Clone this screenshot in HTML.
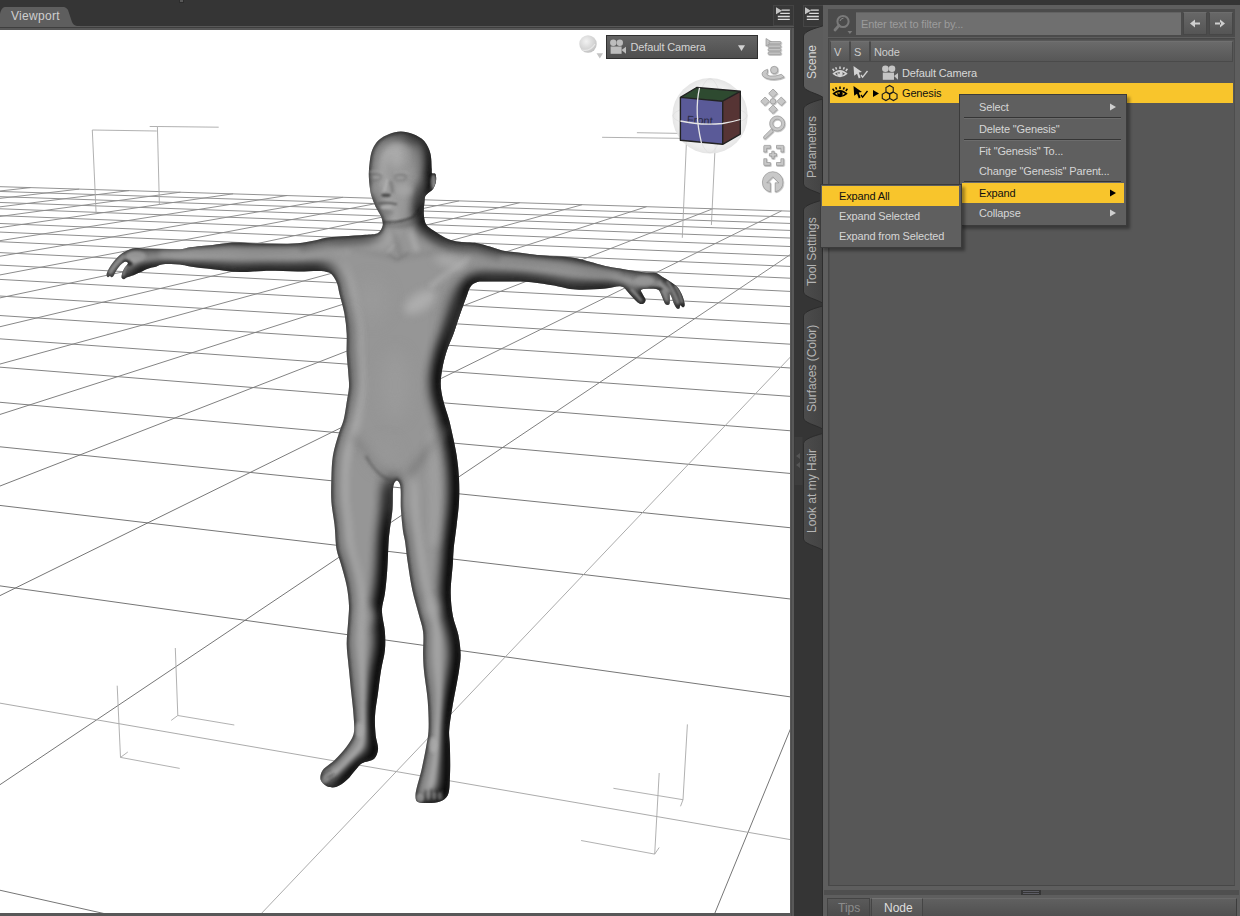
<!DOCTYPE html>
<html><head><meta charset="utf-8">
<style>
*{margin:0;padding:0;box-sizing:border-box}
html,body{width:1240px;height:916px;overflow:hidden;background:#353535;font-family:"Liberation Sans",sans-serif;font-size:11px}
.a{position:absolute}
.t11{font-size:11px;letter-spacing:-0.15px;white-space:nowrap;line-height:12px}
#vp{left:0;top:30px;width:790px;height:883px;background:#fff;overflow:hidden}
.vtab{position:absolute;left:0;top:0}
.vt{position:absolute;color:#b4b4b4;font-size:12px;white-space:nowrap;transform-origin:0 0;transform:rotate(-90deg);line-height:12px}
.hdr{position:absolute;top:41px;height:21px;background:linear-gradient(#6a6a6a,#575757);border:1px solid #4a4a4a;border-top-color:#707070;color:#cdcdcd}
.mi{position:absolute;color:#d6d6d6}
</style></head><body>
<!-- viewport frame -->
<div class="a" style="left:0;top:26px;width:794px;height:890px;background:#585858"></div>
<div class="a" style="left:0;top:27px;width:794px;height:1px;background:#3e3e3e"></div>
<div class="a" style="left:179px;top:0;width:5px;height:3px;background:#585858;border:1px solid #2c2c2c;border-top:none"></div>
<div class="a" style="left:791px;top:28px;width:1px;height:888px;background:#4c4c4c"></div>
<svg class="a" width="80" height="22" style="left:0;top:6px"><path d="M0 21 L0 8 C1 4 2 1.5 5 1 L64 1 C66 1.5 67 2.5 68 4 L72 16 C73 18.5 74.5 19.5 77 20 L80 20 L80 21 Z" fill="#5e5e5e"/></svg>
<div class="a" style="left:11px;top:9px;color:#cfcfcf;font-size:12px;line-height:14px;letter-spacing:0.3px">Viewport</div>
<!-- viewport menu icon -->
<div class="a" style="left:773px;top:5px;width:21px;height:21px;background:#383838;border:1px solid #444"></div>
<svg class="a" width="20" height="20" style="left:773px;top:5px"><path d="M3 2.3 L9 5.8 L3 9.3 Z" fill="#c4c4c4"/><path d="M8.6 5.2H16.8M7.2 8.3H16.8M4.8 11.5H16.8M4.8 14.4H16.8" stroke="#dcdcdc" stroke-width="1.3"/></svg>
<div class="a" id="vp">
<svg width="790" height="883" viewBox="0 30 790 883" style="position:absolute;left:0;top:0">
<defs><linearGradient id="gridg" gradientUnits="userSpaceOnUse" x1="0" y1="180" x2="0" y2="520"><stop offset="0" stop-color="#8e8e8e"/><stop offset="1" stop-color="#6e6e6e"/></linearGradient></defs><path d="M30.6 187.6L-2.0 191.2M79.2 189.1L-2.0 198.6M129.1 190.6L-2.0 207.1M180.4 192.2L-2.0 216.7M233.1 193.8L-2.0 227.9M287.2 195.5L-2.0 241.0M342.9 197.3L-2.0 256.6M400.1 199.0L-2.0 275.3M459.1 200.9L-2.0 298.3M519.7 202.7L-2.0 327.2M582.2 204.7L-2.0 364.6M646.6 206.7L-2.0 415.1M713.0 208.7L-2.0 486.8M781.5 210.9L-2.0 596.6M792.0 253.4L-2.0 786.0M792.0 725.2L714.5 914.0M-2.0 186.6L792.0 211.2M-2.0 191.4L792.0 217.1M-2.0 196.6L792.0 223.5M-2.0 202.4L792.0 230.5M-2.0 208.7L792.0 238.1M-2.0 215.6L792.0 246.6M-2.0 223.4L792.0 256.0M-2.0 232.0L792.0 266.5M-2.0 241.6L792.0 278.3M-2.0 252.5L792.0 291.5M-2.0 265.0L792.0 306.7M-2.0 279.3L792.0 324.1M-2.0 295.9L792.0 344.3M-2.0 315.4L792.0 368.1M-2.0 338.7L792.0 396.5M-2.0 367.0L792.0 430.9M-2.0 402.1L792.0 473.6M-2.0 446.6L792.0 527.9M-2.0 505.2L792.0 599.2M-2.0 585.6L792.0 697.1M-2.0 889.8L106.1 914.0" stroke="url(#gridg)" stroke-width="0.95" fill="none"/>
<path d="M792.0 355.3L260.9 914.0M-2.0 702.8L792.0 839.9" stroke="#a6a6a6" stroke-width="0.95" fill="none"/>
<path d="M177.8 715.5L175.3 648M177.8 715.5L234.3 725M177.8 715.5L171.2 720.4M120.5 757.4L117.2 685.7M120.5 757.4L179.7 768.4M120.5 757.4L127.8 752M683 799.7L687.4 724.4M683 799.7L613.4 788.3M683 799.7L680.5 806.3M654.7 854.1L659.2 773M654.7 854.1L581.1 840.5M654.7 854.1L659.2 847.5M92.3 130L156.8 131M92.3 130L96.1 213.2M157.4 126.5L218.7 127.2M157.4 126.5L149.7 126.5M157.4 126.5L159.4 204.8M687 133.5L636.9 132.7M686.8 133.5L682.3 237.8M715.5 138.8L602.1 137.3M715.5 138.8L711.4 225" stroke="#a8a8a8" stroke-width="0.9" fill="none"/>
<defs>
<clipPath id="figclip"><path d="M400.70 131.40C404.69 131.37 409.04 132.45 412.90 134.00C416.89 135.60 421.31 137.83 424.20 141.00C427.13 144.21 429.04 148.75 430.30 153.20C431.66 157.99 431.37 165.28 431.70 168.90C431.87 170.82 431.37 172.54 432.10 173.30C432.71 173.94 434.51 172.99 435.20 173.70C436.27 174.79 436.32 178.63 436.00 181.10C435.66 183.73 434.55 186.80 433.00 189.00C431.49 191.14 428.29 192.76 426.90 194.20C426.06 195.07 425.52 195.48 425.10 196.50C424.51 197.94 424.59 200.01 424.40 202.30C424.12 205.62 423.43 210.64 423.80 214.50C424.14 218.08 424.58 221.99 426.30 224.70C427.92 227.24 430.74 228.55 433.50 230.50C436.86 232.88 441.20 235.84 445.20 237.70C448.97 239.45 452.32 240.59 456.80 241.50C462.63 242.68 471.44 242.15 477.40 243.20C482.10 244.03 485.67 245.37 489.80 246.60C493.97 247.84 497.70 249.59 502.30 250.60C507.70 251.78 513.96 252.02 520.30 252.80C527.41 253.67 535.01 254.86 542.90 255.60C551.51 256.40 562.70 256.35 570.00 257.30C575.02 257.95 577.81 258.67 582.60 259.80C589.06 261.33 598.43 264.50 605.20 266.00C610.62 267.20 615.22 267.68 620.00 268.50C624.50 269.28 628.73 270.13 633.10 270.80C637.46 271.47 642.21 272.18 646.20 272.50C649.53 272.77 652.61 272.00 655.40 272.80C658.05 273.56 660.11 275.50 662.60 277.00C665.33 278.65 668.49 280.47 671.10 282.30C673.49 283.98 675.93 285.48 677.70 287.50C679.39 289.43 680.55 291.86 681.60 294.10C682.59 296.23 683.42 298.52 683.90 300.60C684.32 302.43 684.95 304.79 684.50 305.90C684.22 306.59 683.50 307.19 682.90 307.20C682.14 307.21 680.90 305.01 680.30 305.20C679.69 305.40 679.97 308.01 679.30 308.50C678.76 308.90 677.70 308.88 677.00 308.50C676.00 307.96 675.18 306.15 674.40 304.60C673.40 302.61 672.71 299.30 671.80 297.40C671.15 296.05 670.18 293.99 669.80 294.10C669.31 294.24 669.96 298.70 669.80 300.60C669.67 302.10 669.85 303.97 669.10 304.60C668.44 305.16 666.83 305.18 665.90 304.60C664.49 303.73 663.74 300.30 662.60 298.00C661.35 295.49 660.27 291.54 658.70 290.10C657.71 289.19 656.81 289.07 655.40 288.80C653.13 288.37 648.82 288.48 646.20 288.80C644.20 289.05 641.52 289.08 641.00 290.10C640.50 291.09 642.18 293.13 642.90 294.70C643.69 296.42 645.63 298.41 645.60 300.00C645.58 301.32 644.56 302.97 643.60 303.60C642.74 304.16 641.46 304.23 640.30 303.90C638.68 303.44 636.89 301.63 635.10 300.00C632.80 297.91 629.94 294.39 627.90 292.10C626.36 290.37 625.37 288.48 623.90 287.50C622.69 286.69 621.74 286.35 620.00 286.20C616.68 285.92 610.67 287.93 605.20 288.50C598.48 289.20 589.04 289.71 582.60 289.70C577.79 289.69 574.41 289.59 570.00 289.00C565.01 288.33 559.95 286.65 554.20 285.60C547.36 284.35 539.15 282.87 531.60 282.20C524.09 281.54 516.33 281.70 509.00 281.60C502.05 281.51 494.48 281.50 488.70 281.60C484.38 281.68 480.53 281.04 477.40 282.00C474.84 282.78 472.77 283.91 471.00 286.00C468.65 288.77 467.63 293.86 465.90 298.30C463.90 303.44 461.81 309.36 459.80 315.10C457.71 321.08 455.74 327.68 453.60 333.50C451.63 338.86 449.27 343.53 447.50 348.80C445.68 354.22 444.03 359.84 442.90 365.60C441.74 371.53 440.63 378.08 440.70 383.90C440.76 389.23 441.70 393.76 442.90 399.20C444.32 405.65 447.47 413.87 449.10 420.00C450.37 424.79 451.03 427.98 452.10 432.90C453.52 439.44 455.55 448.13 456.70 455.80C457.85 463.43 458.62 471.13 459.00 478.80C459.38 486.43 459.38 494.08 459.00 501.70C458.62 509.34 457.57 516.77 456.70 524.60C455.78 532.85 454.22 542.95 453.60 550.00C453.16 555.01 453.23 557.69 452.90 562.90C452.39 570.93 450.57 584.04 450.70 593.50C450.82 601.69 451.62 609.24 453.00 616.40C454.26 622.93 457.04 628.49 458.30 634.80C459.59 641.25 460.55 648.50 460.60 654.70C460.65 660.13 459.97 663.77 459.10 670.00C457.72 679.89 453.96 697.06 452.20 708.20C450.84 716.82 449.38 724.31 449.10 731.20C448.87 736.78 449.74 740.45 449.90 746.40C450.12 754.83 450.45 768.11 449.90 777.00C449.47 783.92 449.95 791.20 447.60 795.40C445.90 798.45 443.21 800.19 440.00 801.50C435.97 803.14 428.92 803.20 424.70 803.00C421.68 802.86 418.51 802.94 417.00 801.50C415.65 800.22 415.51 798.14 415.50 795.40C415.47 789.75 419.77 777.82 421.60 769.40C423.31 761.51 424.99 753.29 426.20 746.40C427.18 740.82 428.13 737.16 428.50 731.20C429.02 722.79 428.46 710.78 427.70 700.60C426.93 690.38 424.65 678.46 423.90 670.00C423.37 664.04 423.25 660.32 423.10 654.70C422.92 647.81 423.99 638.88 423.10 631.70C422.30 625.20 420.17 619.84 418.50 613.40C416.63 606.19 414.14 598.53 412.40 590.50C410.51 581.77 409.11 571.68 407.80 562.90C406.61 554.92 405.74 545.61 404.80 540.00C404.25 536.70 403.70 535.50 403.20 532.20C402.35 526.59 401.46 517.13 400.90 509.30C400.31 501.08 401.57 488.39 399.80 484.00C399.05 482.14 397.79 480.59 396.80 480.60C395.82 480.61 394.64 482.15 393.90 484.00C392.14 488.39 393.26 501.09 392.50 509.30C391.77 517.14 390.16 526.57 389.50 532.20C389.12 535.48 388.96 536.54 388.70 540.00C388.18 546.84 387.91 561.15 387.20 570.60C386.59 578.79 385.88 586.47 384.90 593.50C384.06 599.55 382.01 604.35 381.90 610.30C381.77 616.99 384.42 624.82 384.90 631.70C385.34 638.05 385.49 643.87 384.90 650.10C384.28 656.63 382.22 663.12 381.10 670.00C379.90 677.35 379.02 685.26 378.00 692.90C376.98 700.56 375.35 708.51 375.00 715.90C374.68 722.73 375.10 729.71 375.70 735.70C376.21 740.73 378.46 745.42 378.00 749.50C377.61 752.94 376.53 756.44 374.20 758.70C371.53 761.29 365.20 761.23 362.00 763.30C359.39 764.98 358.09 767.04 355.90 769.40C353.09 772.42 350.12 777.12 346.70 780.10C343.45 782.93 339.59 786.11 336.00 787.00C332.95 787.76 329.38 787.40 326.80 786.20C324.31 785.04 321.50 782.58 320.70 780.10C319.87 777.52 320.58 773.81 322.20 770.90C324.34 767.05 330.53 764.14 334.50 760.20C338.72 756.02 343.40 751.03 346.70 746.40C349.58 742.36 352.37 738.86 353.60 734.20C355.00 728.87 353.92 722.34 353.60 715.90C353.24 708.66 352.07 700.56 351.30 692.90C350.53 685.26 349.57 675.60 349.00 670.00C348.67 666.75 348.49 665.42 348.20 662.30C347.75 657.50 346.75 650.45 346.70 644.00C346.64 636.77 347.80 627.89 348.20 621.00C348.53 615.38 349.17 611.12 349.00 605.70C348.80 599.52 347.99 592.70 346.70 585.90C345.29 578.47 342.46 569.45 340.60 562.90C339.20 557.97 337.68 555.08 336.70 550.00C335.36 543.01 335.41 532.84 334.50 524.60C333.63 516.76 331.92 509.35 331.40 501.70C330.89 494.08 331.15 486.44 331.40 478.80C331.65 471.14 331.65 463.40 332.90 455.80C334.16 448.10 336.98 439.41 339.00 432.90C340.54 427.95 342.36 424.70 343.60 420.00C345.02 414.60 345.77 407.90 346.70 402.20C347.56 396.94 348.75 392.09 349.00 387.00C349.25 381.92 348.56 377.03 348.20 371.70C347.81 365.85 346.95 359.55 346.70 353.30C346.44 346.83 347.08 340.10 346.70 333.50C346.32 326.86 345.60 320.17 344.40 313.60C343.20 307.00 340.93 299.74 339.50 294.00C338.38 289.51 338.27 285.59 336.50 282.00C334.75 278.46 333.02 274.62 329.00 272.60C322.52 269.34 308.33 271.78 297.70 271.50C286.65 271.21 274.19 270.75 263.90 270.90C255.24 271.02 248.21 272.23 240.00 272.00C231.24 271.75 221.52 270.18 212.90 269.20C205.02 268.30 196.36 267.33 190.30 266.40C186.19 265.77 183.33 264.92 180.00 264.50C176.91 264.11 174.06 263.91 171.00 263.90C167.83 263.89 164.17 263.86 161.30 264.50C158.87 265.05 156.99 266.45 154.80 267.10C152.69 267.73 150.63 267.67 148.40 268.40C145.74 269.27 142.62 271.11 140.00 272.30C137.70 273.35 135.73 274.34 133.50 275.20C131.23 276.08 128.23 276.67 126.50 277.50C125.38 278.04 124.73 279.18 123.90 279.20C123.17 279.22 122.17 278.68 121.80 278.00C121.32 277.13 121.67 275.44 122.00 274.00C122.41 272.17 123.48 269.86 124.50 268.00C125.49 266.20 128.24 264.11 128.00 263.00C127.84 262.23 126.48 261.46 125.50 261.50C124.01 261.57 121.58 263.92 120.00 265.50C118.42 267.08 117.16 269.15 116.00 271.00C114.92 272.72 114.14 275.20 113.20 276.20C112.67 276.77 112.15 277.21 111.60 277.20C111.01 277.19 110.40 275.99 109.80 276.00C109.20 276.01 108.53 277.38 108.00 277.30C107.46 277.22 106.77 276.29 106.60 275.50C106.36 274.38 107.08 272.55 107.70 271.00C108.44 269.14 109.70 267.14 111.00 265.20C112.45 263.04 114.20 260.73 116.10 258.70C118.05 256.62 120.34 254.44 122.60 252.90C124.65 251.51 126.76 250.50 129.00 249.70C131.26 248.89 133.57 248.26 136.10 248.10C138.93 247.93 141.90 248.84 145.20 249.00C149.12 249.19 153.23 248.96 158.10 249.00C164.44 249.06 174.09 249.97 180.00 249.40C184.10 249.00 186.18 247.85 190.30 247.20C196.35 246.25 205.90 245.71 212.90 244.90C219.00 244.20 223.32 243.02 230.00 242.70C239.37 242.25 252.61 243.72 263.90 243.80C275.17 243.88 288.38 244.05 297.70 243.20C304.36 242.60 309.37 241.41 314.70 240.40C319.47 239.50 323.57 238.18 328.20 237.50C333.00 236.79 337.56 236.70 343.00 236.30C349.67 235.81 358.86 235.53 365.30 234.80C370.26 234.24 375.46 234.70 378.40 232.70C380.75 231.10 382.18 227.42 382.70 225.40C383.02 224.14 382.78 223.33 382.60 222.10C382.36 220.47 381.94 218.58 381.10 216.50C379.91 213.58 377.11 209.93 375.50 206.50C373.91 203.10 372.48 199.46 371.50 196.00C370.59 192.77 370.14 189.81 369.70 186.40C369.20 182.57 368.80 178.19 368.80 174.10C368.80 170.02 369.12 165.95 369.70 161.90C370.28 157.81 370.73 153.39 372.30 149.70C373.81 146.15 376.01 142.70 378.80 140.10C381.65 137.44 385.61 135.45 389.30 134.00C392.92 132.57 396.83 131.43 400.70 131.40Z"/></clipPath>
<filter id="shade" x="0" y="0" width="790" height="913" filterUnits="userSpaceOnUse" color-interpolation-filters="sRGB">
<feGaussianBlur in="SourceAlpha" stdDeviation="8.0" result="h"/>
<feDiffuseLighting in="h" surfaceScale="20.0" diffuseConstant="1" lighting-color="#a4a4a4" result="d"><feDistantLight azimuth="200.0" elevation="66.0"/></feDiffuseLighting>
<feGaussianBlur in="d" stdDeviation="1.5" result="d2"/>
<feComposite in="d2" in2="SourceAlpha" operator="in"/>
</filter>
<filter id="rimb" x="0" y="0" width="790" height="913" filterUnits="userSpaceOnUse"><feGaussianBlur stdDeviation="1.5"/></filter>
</defs>
<path d="M400.70 131.40C404.69 131.37 409.04 132.45 412.90 134.00C416.89 135.60 421.31 137.83 424.20 141.00C427.13 144.21 429.04 148.75 430.30 153.20C431.66 157.99 431.37 165.28 431.70 168.90C431.87 170.82 431.37 172.54 432.10 173.30C432.71 173.94 434.51 172.99 435.20 173.70C436.27 174.79 436.32 178.63 436.00 181.10C435.66 183.73 434.55 186.80 433.00 189.00C431.49 191.14 428.29 192.76 426.90 194.20C426.06 195.07 425.52 195.48 425.10 196.50C424.51 197.94 424.59 200.01 424.40 202.30C424.12 205.62 423.43 210.64 423.80 214.50C424.14 218.08 424.58 221.99 426.30 224.70C427.92 227.24 430.74 228.55 433.50 230.50C436.86 232.88 441.20 235.84 445.20 237.70C448.97 239.45 452.32 240.59 456.80 241.50C462.63 242.68 471.44 242.15 477.40 243.20C482.10 244.03 485.67 245.37 489.80 246.60C493.97 247.84 497.70 249.59 502.30 250.60C507.70 251.78 513.96 252.02 520.30 252.80C527.41 253.67 535.01 254.86 542.90 255.60C551.51 256.40 562.70 256.35 570.00 257.30C575.02 257.95 577.81 258.67 582.60 259.80C589.06 261.33 598.43 264.50 605.20 266.00C610.62 267.20 615.22 267.68 620.00 268.50C624.50 269.28 628.73 270.13 633.10 270.80C637.46 271.47 642.21 272.18 646.20 272.50C649.53 272.77 652.61 272.00 655.40 272.80C658.05 273.56 660.11 275.50 662.60 277.00C665.33 278.65 668.49 280.47 671.10 282.30C673.49 283.98 675.93 285.48 677.70 287.50C679.39 289.43 680.55 291.86 681.60 294.10C682.59 296.23 683.42 298.52 683.90 300.60C684.32 302.43 684.95 304.79 684.50 305.90C684.22 306.59 683.50 307.19 682.90 307.20C682.14 307.21 680.90 305.01 680.30 305.20C679.69 305.40 679.97 308.01 679.30 308.50C678.76 308.90 677.70 308.88 677.00 308.50C676.00 307.96 675.18 306.15 674.40 304.60C673.40 302.61 672.71 299.30 671.80 297.40C671.15 296.05 670.18 293.99 669.80 294.10C669.31 294.24 669.96 298.70 669.80 300.60C669.67 302.10 669.85 303.97 669.10 304.60C668.44 305.16 666.83 305.18 665.90 304.60C664.49 303.73 663.74 300.30 662.60 298.00C661.35 295.49 660.27 291.54 658.70 290.10C657.71 289.19 656.81 289.07 655.40 288.80C653.13 288.37 648.82 288.48 646.20 288.80C644.20 289.05 641.52 289.08 641.00 290.10C640.50 291.09 642.18 293.13 642.90 294.70C643.69 296.42 645.63 298.41 645.60 300.00C645.58 301.32 644.56 302.97 643.60 303.60C642.74 304.16 641.46 304.23 640.30 303.90C638.68 303.44 636.89 301.63 635.10 300.00C632.80 297.91 629.94 294.39 627.90 292.10C626.36 290.37 625.37 288.48 623.90 287.50C622.69 286.69 621.74 286.35 620.00 286.20C616.68 285.92 610.67 287.93 605.20 288.50C598.48 289.20 589.04 289.71 582.60 289.70C577.79 289.69 574.41 289.59 570.00 289.00C565.01 288.33 559.95 286.65 554.20 285.60C547.36 284.35 539.15 282.87 531.60 282.20C524.09 281.54 516.33 281.70 509.00 281.60C502.05 281.51 494.48 281.50 488.70 281.60C484.38 281.68 480.53 281.04 477.40 282.00C474.84 282.78 472.77 283.91 471.00 286.00C468.65 288.77 467.63 293.86 465.90 298.30C463.90 303.44 461.81 309.36 459.80 315.10C457.71 321.08 455.74 327.68 453.60 333.50C451.63 338.86 449.27 343.53 447.50 348.80C445.68 354.22 444.03 359.84 442.90 365.60C441.74 371.53 440.63 378.08 440.70 383.90C440.76 389.23 441.70 393.76 442.90 399.20C444.32 405.65 447.47 413.87 449.10 420.00C450.37 424.79 451.03 427.98 452.10 432.90C453.52 439.44 455.55 448.13 456.70 455.80C457.85 463.43 458.62 471.13 459.00 478.80C459.38 486.43 459.38 494.08 459.00 501.70C458.62 509.34 457.57 516.77 456.70 524.60C455.78 532.85 454.22 542.95 453.60 550.00C453.16 555.01 453.23 557.69 452.90 562.90C452.39 570.93 450.57 584.04 450.70 593.50C450.82 601.69 451.62 609.24 453.00 616.40C454.26 622.93 457.04 628.49 458.30 634.80C459.59 641.25 460.55 648.50 460.60 654.70C460.65 660.13 459.97 663.77 459.10 670.00C457.72 679.89 453.96 697.06 452.20 708.20C450.84 716.82 449.38 724.31 449.10 731.20C448.87 736.78 449.74 740.45 449.90 746.40C450.12 754.83 450.45 768.11 449.90 777.00C449.47 783.92 449.95 791.20 447.60 795.40C445.90 798.45 443.21 800.19 440.00 801.50C435.97 803.14 428.92 803.20 424.70 803.00C421.68 802.86 418.51 802.94 417.00 801.50C415.65 800.22 415.51 798.14 415.50 795.40C415.47 789.75 419.77 777.82 421.60 769.40C423.31 761.51 424.99 753.29 426.20 746.40C427.18 740.82 428.13 737.16 428.50 731.20C429.02 722.79 428.46 710.78 427.70 700.60C426.93 690.38 424.65 678.46 423.90 670.00C423.37 664.04 423.25 660.32 423.10 654.70C422.92 647.81 423.99 638.88 423.10 631.70C422.30 625.20 420.17 619.84 418.50 613.40C416.63 606.19 414.14 598.53 412.40 590.50C410.51 581.77 409.11 571.68 407.80 562.90C406.61 554.92 405.74 545.61 404.80 540.00C404.25 536.70 403.70 535.50 403.20 532.20C402.35 526.59 401.46 517.13 400.90 509.30C400.31 501.08 401.57 488.39 399.80 484.00C399.05 482.14 397.79 480.59 396.80 480.60C395.82 480.61 394.64 482.15 393.90 484.00C392.14 488.39 393.26 501.09 392.50 509.30C391.77 517.14 390.16 526.57 389.50 532.20C389.12 535.48 388.96 536.54 388.70 540.00C388.18 546.84 387.91 561.15 387.20 570.60C386.59 578.79 385.88 586.47 384.90 593.50C384.06 599.55 382.01 604.35 381.90 610.30C381.77 616.99 384.42 624.82 384.90 631.70C385.34 638.05 385.49 643.87 384.90 650.10C384.28 656.63 382.22 663.12 381.10 670.00C379.90 677.35 379.02 685.26 378.00 692.90C376.98 700.56 375.35 708.51 375.00 715.90C374.68 722.73 375.10 729.71 375.70 735.70C376.21 740.73 378.46 745.42 378.00 749.50C377.61 752.94 376.53 756.44 374.20 758.70C371.53 761.29 365.20 761.23 362.00 763.30C359.39 764.98 358.09 767.04 355.90 769.40C353.09 772.42 350.12 777.12 346.70 780.10C343.45 782.93 339.59 786.11 336.00 787.00C332.95 787.76 329.38 787.40 326.80 786.20C324.31 785.04 321.50 782.58 320.70 780.10C319.87 777.52 320.58 773.81 322.20 770.90C324.34 767.05 330.53 764.14 334.50 760.20C338.72 756.02 343.40 751.03 346.70 746.40C349.58 742.36 352.37 738.86 353.60 734.20C355.00 728.87 353.92 722.34 353.60 715.90C353.24 708.66 352.07 700.56 351.30 692.90C350.53 685.26 349.57 675.60 349.00 670.00C348.67 666.75 348.49 665.42 348.20 662.30C347.75 657.50 346.75 650.45 346.70 644.00C346.64 636.77 347.80 627.89 348.20 621.00C348.53 615.38 349.17 611.12 349.00 605.70C348.80 599.52 347.99 592.70 346.70 585.90C345.29 578.47 342.46 569.45 340.60 562.90C339.20 557.97 337.68 555.08 336.70 550.00C335.36 543.01 335.41 532.84 334.50 524.60C333.63 516.76 331.92 509.35 331.40 501.70C330.89 494.08 331.15 486.44 331.40 478.80C331.65 471.14 331.65 463.40 332.90 455.80C334.16 448.10 336.98 439.41 339.00 432.90C340.54 427.95 342.36 424.70 343.60 420.00C345.02 414.60 345.77 407.90 346.70 402.20C347.56 396.94 348.75 392.09 349.00 387.00C349.25 381.92 348.56 377.03 348.20 371.70C347.81 365.85 346.95 359.55 346.70 353.30C346.44 346.83 347.08 340.10 346.70 333.50C346.32 326.86 345.60 320.17 344.40 313.60C343.20 307.00 340.93 299.74 339.50 294.00C338.38 289.51 338.27 285.59 336.50 282.00C334.75 278.46 333.02 274.62 329.00 272.60C322.52 269.34 308.33 271.78 297.70 271.50C286.65 271.21 274.19 270.75 263.90 270.90C255.24 271.02 248.21 272.23 240.00 272.00C231.24 271.75 221.52 270.18 212.90 269.20C205.02 268.30 196.36 267.33 190.30 266.40C186.19 265.77 183.33 264.92 180.00 264.50C176.91 264.11 174.06 263.91 171.00 263.90C167.83 263.89 164.17 263.86 161.30 264.50C158.87 265.05 156.99 266.45 154.80 267.10C152.69 267.73 150.63 267.67 148.40 268.40C145.74 269.27 142.62 271.11 140.00 272.30C137.70 273.35 135.73 274.34 133.50 275.20C131.23 276.08 128.23 276.67 126.50 277.50C125.38 278.04 124.73 279.18 123.90 279.20C123.17 279.22 122.17 278.68 121.80 278.00C121.32 277.13 121.67 275.44 122.00 274.00C122.41 272.17 123.48 269.86 124.50 268.00C125.49 266.20 128.24 264.11 128.00 263.00C127.84 262.23 126.48 261.46 125.50 261.50C124.01 261.57 121.58 263.92 120.00 265.50C118.42 267.08 117.16 269.15 116.00 271.00C114.92 272.72 114.14 275.20 113.20 276.20C112.67 276.77 112.15 277.21 111.60 277.20C111.01 277.19 110.40 275.99 109.80 276.00C109.20 276.01 108.53 277.38 108.00 277.30C107.46 277.22 106.77 276.29 106.60 275.50C106.36 274.38 107.08 272.55 107.70 271.00C108.44 269.14 109.70 267.14 111.00 265.20C112.45 263.04 114.20 260.73 116.10 258.70C118.05 256.62 120.34 254.44 122.60 252.90C124.65 251.51 126.76 250.50 129.00 249.70C131.26 248.89 133.57 248.26 136.10 248.10C138.93 247.93 141.90 248.84 145.20 249.00C149.12 249.19 153.23 248.96 158.10 249.00C164.44 249.06 174.09 249.97 180.00 249.40C184.10 249.00 186.18 247.85 190.30 247.20C196.35 246.25 205.90 245.71 212.90 244.90C219.00 244.20 223.32 243.02 230.00 242.70C239.37 242.25 252.61 243.72 263.90 243.80C275.17 243.88 288.38 244.05 297.70 243.20C304.36 242.60 309.37 241.41 314.70 240.40C319.47 239.50 323.57 238.18 328.20 237.50C333.00 236.79 337.56 236.70 343.00 236.30C349.67 235.81 358.86 235.53 365.30 234.80C370.26 234.24 375.46 234.70 378.40 232.70C380.75 231.10 382.18 227.42 382.70 225.40C383.02 224.14 382.78 223.33 382.60 222.10C382.36 220.47 381.94 218.58 381.10 216.50C379.91 213.58 377.11 209.93 375.50 206.50C373.91 203.10 372.48 199.46 371.50 196.00C370.59 192.77 370.14 189.81 369.70 186.40C369.20 182.57 368.80 178.19 368.80 174.10C368.80 170.02 369.12 165.95 369.70 161.90C370.28 157.81 370.73 153.39 372.30 149.70C373.81 146.15 376.01 142.70 378.80 140.10C381.65 137.44 385.61 135.45 389.30 134.00C392.92 132.57 396.83 131.43 400.70 131.40Z" fill="#000" filter="url(#shade)"/>
<g clip-path="url(#figclip)"><path d="M400.70 131.40C404.69 131.37 409.04 132.45 412.90 134.00C416.89 135.60 421.31 137.83 424.20 141.00C427.13 144.21 429.04 148.75 430.30 153.20C431.66 157.99 431.37 165.28 431.70 168.90C431.87 170.82 431.37 172.54 432.10 173.30C432.71 173.94 434.51 172.99 435.20 173.70C436.27 174.79 436.32 178.63 436.00 181.10C435.66 183.73 434.55 186.80 433.00 189.00C431.49 191.14 428.29 192.76 426.90 194.20C426.06 195.07 425.52 195.48 425.10 196.50C424.51 197.94 424.59 200.01 424.40 202.30C424.12 205.62 423.43 210.64 423.80 214.50C424.14 218.08 424.58 221.99 426.30 224.70C427.92 227.24 430.74 228.55 433.50 230.50C436.86 232.88 441.20 235.84 445.20 237.70C448.97 239.45 452.32 240.59 456.80 241.50C462.63 242.68 471.44 242.15 477.40 243.20C482.10 244.03 485.67 245.37 489.80 246.60C493.97 247.84 497.70 249.59 502.30 250.60C507.70 251.78 513.96 252.02 520.30 252.80C527.41 253.67 535.01 254.86 542.90 255.60C551.51 256.40 562.70 256.35 570.00 257.30C575.02 257.95 577.81 258.67 582.60 259.80C589.06 261.33 598.43 264.50 605.20 266.00C610.62 267.20 615.22 267.68 620.00 268.50C624.50 269.28 628.73 270.13 633.10 270.80C637.46 271.47 642.21 272.18 646.20 272.50C649.53 272.77 652.61 272.00 655.40 272.80C658.05 273.56 660.11 275.50 662.60 277.00C665.33 278.65 668.49 280.47 671.10 282.30C673.49 283.98 675.93 285.48 677.70 287.50C679.39 289.43 680.55 291.86 681.60 294.10C682.59 296.23 683.42 298.52 683.90 300.60C684.32 302.43 684.95 304.79 684.50 305.90C684.22 306.59 683.50 307.19 682.90 307.20C682.14 307.21 680.90 305.01 680.30 305.20C679.69 305.40 679.97 308.01 679.30 308.50C678.76 308.90 677.70 308.88 677.00 308.50C676.00 307.96 675.18 306.15 674.40 304.60C673.40 302.61 672.71 299.30 671.80 297.40C671.15 296.05 670.18 293.99 669.80 294.10C669.31 294.24 669.96 298.70 669.80 300.60C669.67 302.10 669.85 303.97 669.10 304.60C668.44 305.16 666.83 305.18 665.90 304.60C664.49 303.73 663.74 300.30 662.60 298.00C661.35 295.49 660.27 291.54 658.70 290.10C657.71 289.19 656.81 289.07 655.40 288.80C653.13 288.37 648.82 288.48 646.20 288.80C644.20 289.05 641.52 289.08 641.00 290.10C640.50 291.09 642.18 293.13 642.90 294.70C643.69 296.42 645.63 298.41 645.60 300.00C645.58 301.32 644.56 302.97 643.60 303.60C642.74 304.16 641.46 304.23 640.30 303.90C638.68 303.44 636.89 301.63 635.10 300.00C632.80 297.91 629.94 294.39 627.90 292.10C626.36 290.37 625.37 288.48 623.90 287.50C622.69 286.69 621.74 286.35 620.00 286.20C616.68 285.92 610.67 287.93 605.20 288.50C598.48 289.20 589.04 289.71 582.60 289.70C577.79 289.69 574.41 289.59 570.00 289.00C565.01 288.33 559.95 286.65 554.20 285.60C547.36 284.35 539.15 282.87 531.60 282.20C524.09 281.54 516.33 281.70 509.00 281.60C502.05 281.51 494.48 281.50 488.70 281.60C484.38 281.68 480.53 281.04 477.40 282.00C474.84 282.78 472.77 283.91 471.00 286.00C468.65 288.77 467.63 293.86 465.90 298.30C463.90 303.44 461.81 309.36 459.80 315.10C457.71 321.08 455.74 327.68 453.60 333.50C451.63 338.86 449.27 343.53 447.50 348.80C445.68 354.22 444.03 359.84 442.90 365.60C441.74 371.53 440.63 378.08 440.70 383.90C440.76 389.23 441.70 393.76 442.90 399.20C444.32 405.65 447.47 413.87 449.10 420.00C450.37 424.79 451.03 427.98 452.10 432.90C453.52 439.44 455.55 448.13 456.70 455.80C457.85 463.43 458.62 471.13 459.00 478.80C459.38 486.43 459.38 494.08 459.00 501.70C458.62 509.34 457.57 516.77 456.70 524.60C455.78 532.85 454.22 542.95 453.60 550.00C453.16 555.01 453.23 557.69 452.90 562.90C452.39 570.93 450.57 584.04 450.70 593.50C450.82 601.69 451.62 609.24 453.00 616.40C454.26 622.93 457.04 628.49 458.30 634.80C459.59 641.25 460.55 648.50 460.60 654.70C460.65 660.13 459.97 663.77 459.10 670.00C457.72 679.89 453.96 697.06 452.20 708.20C450.84 716.82 449.38 724.31 449.10 731.20C448.87 736.78 449.74 740.45 449.90 746.40C450.12 754.83 450.45 768.11 449.90 777.00C449.47 783.92 449.95 791.20 447.60 795.40C445.90 798.45 443.21 800.19 440.00 801.50C435.97 803.14 428.92 803.20 424.70 803.00C421.68 802.86 418.51 802.94 417.00 801.50C415.65 800.22 415.51 798.14 415.50 795.40C415.47 789.75 419.77 777.82 421.60 769.40C423.31 761.51 424.99 753.29 426.20 746.40C427.18 740.82 428.13 737.16 428.50 731.20C429.02 722.79 428.46 710.78 427.70 700.60C426.93 690.38 424.65 678.46 423.90 670.00C423.37 664.04 423.25 660.32 423.10 654.70C422.92 647.81 423.99 638.88 423.10 631.70C422.30 625.20 420.17 619.84 418.50 613.40C416.63 606.19 414.14 598.53 412.40 590.50C410.51 581.77 409.11 571.68 407.80 562.90C406.61 554.92 405.74 545.61 404.80 540.00C404.25 536.70 403.70 535.50 403.20 532.20C402.35 526.59 401.46 517.13 400.90 509.30C400.31 501.08 401.57 488.39 399.80 484.00C399.05 482.14 397.79 480.59 396.80 480.60C395.82 480.61 394.64 482.15 393.90 484.00C392.14 488.39 393.26 501.09 392.50 509.30C391.77 517.14 390.16 526.57 389.50 532.20C389.12 535.48 388.96 536.54 388.70 540.00C388.18 546.84 387.91 561.15 387.20 570.60C386.59 578.79 385.88 586.47 384.90 593.50C384.06 599.55 382.01 604.35 381.90 610.30C381.77 616.99 384.42 624.82 384.90 631.70C385.34 638.05 385.49 643.87 384.90 650.10C384.28 656.63 382.22 663.12 381.10 670.00C379.90 677.35 379.02 685.26 378.00 692.90C376.98 700.56 375.35 708.51 375.00 715.90C374.68 722.73 375.10 729.71 375.70 735.70C376.21 740.73 378.46 745.42 378.00 749.50C377.61 752.94 376.53 756.44 374.20 758.70C371.53 761.29 365.20 761.23 362.00 763.30C359.39 764.98 358.09 767.04 355.90 769.40C353.09 772.42 350.12 777.12 346.70 780.10C343.45 782.93 339.59 786.11 336.00 787.00C332.95 787.76 329.38 787.40 326.80 786.20C324.31 785.04 321.50 782.58 320.70 780.10C319.87 777.52 320.58 773.81 322.20 770.90C324.34 767.05 330.53 764.14 334.50 760.20C338.72 756.02 343.40 751.03 346.70 746.40C349.58 742.36 352.37 738.86 353.60 734.20C355.00 728.87 353.92 722.34 353.60 715.90C353.24 708.66 352.07 700.56 351.30 692.90C350.53 685.26 349.57 675.60 349.00 670.00C348.67 666.75 348.49 665.42 348.20 662.30C347.75 657.50 346.75 650.45 346.70 644.00C346.64 636.77 347.80 627.89 348.20 621.00C348.53 615.38 349.17 611.12 349.00 605.70C348.80 599.52 347.99 592.70 346.70 585.90C345.29 578.47 342.46 569.45 340.60 562.90C339.20 557.97 337.68 555.08 336.70 550.00C335.36 543.01 335.41 532.84 334.50 524.60C333.63 516.76 331.92 509.35 331.40 501.70C330.89 494.08 331.15 486.44 331.40 478.80C331.65 471.14 331.65 463.40 332.90 455.80C334.16 448.10 336.98 439.41 339.00 432.90C340.54 427.95 342.36 424.70 343.60 420.00C345.02 414.60 345.77 407.90 346.70 402.20C347.56 396.94 348.75 392.09 349.00 387.00C349.25 381.92 348.56 377.03 348.20 371.70C347.81 365.85 346.95 359.55 346.70 353.30C346.44 346.83 347.08 340.10 346.70 333.50C346.32 326.86 345.60 320.17 344.40 313.60C343.20 307.00 340.93 299.74 339.50 294.00C338.38 289.51 338.27 285.59 336.50 282.00C334.75 278.46 333.02 274.62 329.00 272.60C322.52 269.34 308.33 271.78 297.70 271.50C286.65 271.21 274.19 270.75 263.90 270.90C255.24 271.02 248.21 272.23 240.00 272.00C231.24 271.75 221.52 270.18 212.90 269.20C205.02 268.30 196.36 267.33 190.30 266.40C186.19 265.77 183.33 264.92 180.00 264.50C176.91 264.11 174.06 263.91 171.00 263.90C167.83 263.89 164.17 263.86 161.30 264.50C158.87 265.05 156.99 266.45 154.80 267.10C152.69 267.73 150.63 267.67 148.40 268.40C145.74 269.27 142.62 271.11 140.00 272.30C137.70 273.35 135.73 274.34 133.50 275.20C131.23 276.08 128.23 276.67 126.50 277.50C125.38 278.04 124.73 279.18 123.90 279.20C123.17 279.22 122.17 278.68 121.80 278.00C121.32 277.13 121.67 275.44 122.00 274.00C122.41 272.17 123.48 269.86 124.50 268.00C125.49 266.20 128.24 264.11 128.00 263.00C127.84 262.23 126.48 261.46 125.50 261.50C124.01 261.57 121.58 263.92 120.00 265.50C118.42 267.08 117.16 269.15 116.00 271.00C114.92 272.72 114.14 275.20 113.20 276.20C112.67 276.77 112.15 277.21 111.60 277.20C111.01 277.19 110.40 275.99 109.80 276.00C109.20 276.01 108.53 277.38 108.00 277.30C107.46 277.22 106.77 276.29 106.60 275.50C106.36 274.38 107.08 272.55 107.70 271.00C108.44 269.14 109.70 267.14 111.00 265.20C112.45 263.04 114.20 260.73 116.10 258.70C118.05 256.62 120.34 254.44 122.60 252.90C124.65 251.51 126.76 250.50 129.00 249.70C131.26 248.89 133.57 248.26 136.10 248.10C138.93 247.93 141.90 248.84 145.20 249.00C149.12 249.19 153.23 248.96 158.10 249.00C164.44 249.06 174.09 249.97 180.00 249.40C184.10 249.00 186.18 247.85 190.30 247.20C196.35 246.25 205.90 245.71 212.90 244.90C219.00 244.20 223.32 243.02 230.00 242.70C239.37 242.25 252.61 243.72 263.90 243.80C275.17 243.88 288.38 244.05 297.70 243.20C304.36 242.60 309.37 241.41 314.70 240.40C319.47 239.50 323.57 238.18 328.20 237.50C333.00 236.79 337.56 236.70 343.00 236.30C349.67 235.81 358.86 235.53 365.30 234.80C370.26 234.24 375.46 234.70 378.40 232.70C380.75 231.10 382.18 227.42 382.70 225.40C383.02 224.14 382.78 223.33 382.60 222.10C382.36 220.47 381.94 218.58 381.10 216.50C379.91 213.58 377.11 209.93 375.50 206.50C373.91 203.10 372.48 199.46 371.50 196.00C370.59 192.77 370.14 189.81 369.70 186.40C369.20 182.57 368.80 178.19 368.80 174.10C368.80 170.02 369.12 165.95 369.70 161.90C370.28 157.81 370.73 153.39 372.30 149.70C373.81 146.15 376.01 142.70 378.80 140.10C381.65 137.44 385.61 135.45 389.30 134.00C392.92 132.57 396.83 131.43 400.70 131.40Z" fill="none" stroke="#262626" stroke-width="4.5" filter="url(#rimb)" opacity="0.7"/></g>
<filter id="bl1" x="0" y="0" width="790" height="913" filterUnits="userSpaceOnUse"><feGaussianBlur stdDeviation="0.8"/></filter>
<filter id="bl2" x="0" y="0" width="790" height="913" filterUnits="userSpaceOnUse"><feGaussianBlur stdDeviation="1.8"/></filter>
<filter id="bl3" x="0" y="0" width="790" height="913" filterUnits="userSpaceOnUse"><feGaussianBlur stdDeviation="2.6"/></filter>
<filter id="bl4" x="0" y="0" width="790" height="913" filterUnits="userSpaceOnUse"><feGaussianBlur stdDeviation="4"/></filter>
<filter id="bl8" x="0" y="0" width="790" height="913" filterUnits="userSpaceOnUse"><feGaussianBlur stdDeviation="8"/></filter>
<g clip-path="url(#figclip)">
<!-- forehead highlight -->
<ellipse cx="418" cy="158" rx="8" ry="16" fill="#8c8c8c" filter="url(#bl4)" opacity="0.6"/>
<ellipse cx="396" cy="156" rx="9" ry="12" fill="#b4b4b4" filter="url(#bl4)" opacity="0.7"/>
<!-- right face darker -->
<ellipse cx="421" cy="195" rx="6" ry="16" fill="#5a5a5a" filter="url(#bl4)" opacity="0.6"/>
<!-- eyes -->
<ellipse cx="376" cy="177" rx="6.5" ry="4.2" fill="#6c6c6c" filter="url(#bl2)" opacity="0.7"/>
<ellipse cx="376.5" cy="177.3" rx="4" ry="1.8" fill="#989898" filter="url(#bl1)"/>
<ellipse cx="400" cy="177.5" rx="7" ry="4.2" fill="#6c6c6c" filter="url(#bl2)" opacity="0.7"/>
<ellipse cx="400.5" cy="177.8" rx="4.3" ry="1.8" fill="#989898" filter="url(#bl1)"/>
<path d="M369 172 Q377 170 383 173 M394 173 Q401 170.5 409 173" stroke="#b0b0b0" stroke-width="1.5" fill="none" filter="url(#bl1)" opacity="0.6"/>
<!-- cheeks -->
<ellipse cx="392" cy="190" rx="18" ry="26" fill="#a0a0a0" filter="url(#bl8)" opacity="0.5"/>
<ellipse cx="404" cy="190" rx="8" ry="6" fill="#a8a8a8" filter="url(#bl3)" opacity="0.7"/>
<ellipse cx="373" cy="190" rx="4" ry="6" fill="#a0a0a0" filter="url(#bl3)" opacity="0.5"/>
<!-- nose -->
<path d="M387.5 179 Q385.5 187 384 192" stroke="#b4b4b4" stroke-width="2.4" fill="none" filter="url(#bl1)" opacity="0.85"/>
<path d="M390.5 181 Q392.5 188 392.5 193" stroke="#606060" stroke-width="2.5" fill="none" filter="url(#bl2)" opacity="0.6"/>
<ellipse cx="386" cy="195.3" rx="5" ry="1.8" fill="#4a4a4a" filter="url(#bl1)"/>
<!-- mouth -->
<path d="M377.5 203.8 Q386 202 397 204.3" stroke="#505050" stroke-width="1.6" fill="none" filter="url(#bl1)"/>
<ellipse cx="386.5" cy="207.3" rx="6" ry="2" fill="#acacac" filter="url(#bl1)"/>
<ellipse cx="388" cy="212.5" rx="6" ry="2.5" fill="#777" filter="url(#bl2)" opacity="0.5"/>
<!-- jaw shadow -->
<path d="M381 222 Q398 224 412 218 Q420 213 424.5 205 L427 214 Q416 228 396 229 L382 226 Z" fill="#4a4a4a" filter="url(#bl2)" opacity="0.3"/>
<path d="M381.5 222 Q398 223.5 412 217.5 Q420 212.5 424.5 205" stroke="#2a2a2a" stroke-width="1.5" fill="none" filter="url(#bl1)" opacity="0.8"/>
<!-- ear -->
<ellipse cx="433.5" cy="182" rx="2.6" ry="7.5" fill="#8e8e8e" filter="url(#bl1)"/>
<path d="M434 176 Q432 183 430.5 190" stroke="#505050" stroke-width="1.2" fill="none" filter="url(#bl1)" opacity="0.8"/>
<!-- neck -->
<path d="M410 231 Q414 241 417 252" stroke="#b8b8b8" stroke-width="5" fill="none" filter="url(#bl3)" opacity="0.6"/>
<path d="M392 228 Q397 242 401 256" stroke="#686868" stroke-width="3" fill="none" filter="url(#bl3)" opacity="0.5"/>
<path d="M386 253 Q393 257 397 260 Q403 256 409 253" stroke="#5a5a5a" stroke-width="2" fill="none" filter="url(#bl2)" opacity="0.3"/>
<path d="M386 254 Q391 250 394 244" stroke="#b0b0b0" stroke-width="2.5" fill="none" filter="url(#bl2)" opacity="0.5"/>
<!-- clavicles -->
<path d="M352 250 Q375 252 396 259 Q425 253 458 249" stroke="#707070" stroke-width="3" fill="none" filter="url(#bl3)" opacity="0.35"/>
<path d="M430 287 Q448 272 470 258" stroke="#b8b8b8" stroke-width="5" fill="none" filter="url(#bl3)" opacity="0.55"/>
<!-- chest highlight -->
<ellipse cx="420" cy="302" rx="18" ry="9" fill="#b8b8b8" transform="rotate(-32 420 302)" filter="url(#bl4)" opacity="0.7"/>
<ellipse cx="450" cy="262" rx="16" ry="5" fill="#b4b4b4" transform="rotate(15 450 262)" filter="url(#bl4)" opacity="0.7"/>
<ellipse cx="372" cy="300" rx="16" ry="22" fill="#9c9c9c" filter="url(#bl8)" opacity="0.6"/>
<!-- right torso dark -->
<ellipse cx="458" cy="345" rx="14" ry="60" fill="#4a4a4a" filter="url(#bl8)" opacity="0.55"/>
<ellipse cx="347" cy="360" rx="6" ry="50" fill="#5a5a5a" filter="url(#bl8)" opacity="0.5"/>
<!-- abdomen light -->
<ellipse cx="395" cy="385" rx="14" ry="35" fill="#9e9e9e" filter="url(#bl8)" opacity="0.6"/>
<!-- pelvis -->
<path d="M352 436 Q372 458 388 476" stroke="#707070" stroke-width="6" fill="none" filter="url(#bl4)" opacity="0.5"/>
<path d="M446 428 Q425 455 408 476" stroke="#666" stroke-width="6" fill="none" filter="url(#bl4)" opacity="0.6"/>

<!-- right thigh highlight -->
<path d="M431 432 Q436 480 434 545" stroke="#b0b0b0" stroke-width="6" fill="none" filter="url(#bl4)" opacity="0.6"/>
<!-- knees / shins -->
<ellipse cx="367" cy="616" rx="8" ry="10" fill="#a0a0a0" filter="url(#bl4)" opacity="0.6"/>
<ellipse cx="432" cy="608" rx="7" ry="10" fill="#a8a8a8" filter="url(#bl4)" opacity="0.6"/>
<ellipse cx="359" cy="730" rx="4" ry="8" fill="#b0b0b0" filter="url(#bl2)" opacity="0.6"/>
<ellipse cx="433" cy="745" rx="4" ry="8" fill="#b4b4b4" filter="url(#bl2)" opacity="0.6"/>
<!-- toes -->
<path d="M321.5 775.5 Q326 772 331 769.5 M323.5 780.5 Q329 776.5 334.5 773.5 M327.5 784.5 Q332 780 338 777" stroke="#3c3c3c" stroke-width="1" fill="none" filter="url(#bl1)" opacity="0.8"/>
<ellipse cx="325" cy="780" rx="3" ry="4.5" fill="#a0a0a0" filter="url(#bl1)" opacity="0.5" transform="rotate(50 325 780)"/>
<path d="M425.5 790 V801.5 M431.5 789 V802 M437 789.5 V801.5 M442.5 790 V800" stroke="#3a3a3a" stroke-width="1.1" fill="none" filter="url(#bl1)" opacity="0.85"/>
<ellipse cx="420" cy="798" rx="4" ry="4.5" fill="#a4a4a4" filter="url(#bl1)" opacity="0.6"/>
<ellipse cx="428.5" cy="796" rx="2.2" ry="4" fill="#a0a0a0" filter="url(#bl1)" opacity="0.5"/>
<ellipse cx="434.3" cy="796" rx="2.2" ry="4" fill="#a0a0a0" filter="url(#bl1)" opacity="0.5"/>
<ellipse cx="439.8" cy="796" rx="2.2" ry="4" fill="#a0a0a0" filter="url(#bl1)" opacity="0.5"/>
<!-- crotch crease -->
<path d="M366 456 Q376 474 388 479.5 Q394 481.5 397 481" stroke="#4a4a4a" stroke-width="2.5" fill="none" filter="url(#bl2)" opacity="0.7"/>
<ellipse cx="384" cy="455" rx="14" ry="14" fill="#9a9a9a" filter="url(#bl8)" opacity="0.6"/>
<!-- arm lightening -->
<path d="M140 256 Q200 253 250 256 Q300 255 335 252" stroke="#8e8e8e" stroke-width="12" fill="none" filter="url(#bl4)" opacity="0.55"/>
<path d="M470 258 Q540 265 600 274 Q630 279 660 284" stroke="#8a8a8a" stroke-width="12" fill="none" filter="url(#bl4)" opacity="0.55"/>
<path d="M636 284 Q650 284 662 290 Q670 296 676 303" stroke="#888" stroke-width="8" fill="none" filter="url(#bl3)" opacity="0.5"/>
<!-- arm highlights -->
<path d="M160 254 Q220 249 300 251" stroke="#a8a8a8" stroke-width="6" fill="none" filter="url(#bl3)" opacity="0.5"/>
<path d="M500 259 Q560 263 620 275" stroke="#a4a4a4" stroke-width="6" fill="none" filter="url(#bl3)" opacity="0.45"/>
<!-- hand highlights -->
<ellipse cx="644" cy="281" rx="10" ry="5" fill="#9a9a9a" filter="url(#bl2)" opacity="0.8"/>
<path d="M631 289 Q637 295 641.5 301 M659 281 Q664 290 667 301 M667 281 Q674 290 678.5 304 M675 285 Q680 293 682.5 303" stroke="#8e8e8e" stroke-width="2.6" fill="none" filter="url(#bl1)" opacity="0.85"/>
<ellipse cx="136" cy="256" rx="10" ry="5" fill="#9c9c9c" filter="url(#bl2)" opacity="0.8"/>
<path d="M124 255 Q115 263 109.5 273 M127.5 264 Q124 270 123 276" stroke="#909090" stroke-width="2.6" fill="none" filter="url(#bl1)" opacity="0.85"/>
<!-- hand gap -->
<ellipse cx="128" cy="263" rx="5" ry="2.5" fill="#333" filter="url(#bl1)" transform="rotate(20 128 263)"/>
<ellipse cx="655" cy="289" rx="8" ry="2" fill="#333" filter="url(#bl1)"/>
</g>

<defs>
<radialGradient id="sph" cx="0.4" cy="0.35" r="0.7"><stop offset="0" stop-color="#f2f2f2"/><stop offset="0.7" stop-color="#d2d2d2"/><stop offset="1" stop-color="#bdbdbd"/></radialGradient>
<linearGradient id="dd" x1="0" x2="0" y1="0" y2="1"><stop offset="0" stop-color="#646464"/><stop offset="1" stop-color="#4e4e4e"/></linearGradient>
<radialGradient id="navs" cx="0.5" cy="0.5" r="0.5"><stop offset="0" stop-color="#f4f4f4"/><stop offset="0.85" stop-color="#ececec"/><stop offset="1" stop-color="#e2e2e2"/></radialGradient>
<filter id="ish" x="-30%" y="-30%" width="160%" height="160%"><feDropShadow dx="0.6" dy="0.8" stdDeviation="0.5" flood-color="#000" flood-opacity="0.35"/></filter>
</defs>
<circle cx="588" cy="44" r="8.7" fill="url(#sph)"/>
<path d="M582 50 Q590 52 595 44" stroke="#e8e8e8" stroke-width="1.2" fill="none"/>
<path d="M596.5 53.3 L603 53.3 L599.8 58.5Z" fill="#c4c4c4"/>
<rect x="606.5" y="35.5" width="151" height="23" fill="url(#dd)" stroke="#2f2f2f"/>
<g fill="#bdbdbd"><circle cx="613.3" cy="42.8" r="3.2"/><circle cx="619.8" cy="42.8" r="3.2"/><rect x="610.6" y="46.5" width="11" height="7.3"/><path d="M621.5 50 L626 46.8 L626 53.8Z"/></g>
<text x="630.5" y="50.8" font-family="Liberation Sans" font-size="11" letter-spacing="-0.15" fill="#d4d4d4">Default Camera</text>
<path d="M738 45.3 L745 45.3 L741.5 51Z" fill="#d2d2d2"/>
<g filter="url(#ish)" fill="#c4c4c4" stroke="#8e8e8e" stroke-width="0.6">
<path d="M766 38.5 L772 42.2 L766 46Z"/>
<rect x="769" y="41.5" width="12" height="2.4" rx="1"/><rect x="768" y="45" width="13" height="2.4" rx="1"/><rect x="768" y="48.5" width="13" height="2.4" rx="1"/><rect x="768" y="52" width="13" height="2.4" rx="1"/>
</g>
<g filter="url(#ish)" fill="#c8c8c8" stroke="#8a8a8a" stroke-width="0.6">
<circle cx="774.2" cy="70" r="3.7"/>
<path d="M767.5 69.3 Q760.5 71.5 762.5 75.5 Q765.5 79.6 774 79.4 Q781 79.2 784.3 77 L781.3 74.3 Q776 76.6 770 76 Q765.5 75 767.5 72.3Z"/>
<path d="M773 89 L777.3 93.3 L773 97.6 L768.7 93.3Z"/><path d="M773 105 L777.3 109.3 L773 113.6 L768.7 109.3Z"/>
<path d="M765 97 L769.3 101.3 L765 105.6 L760.7 101.3Z"/><path d="M781.2 97 L785.5 101.3 L781.2 105.6 L776.9 101.3Z"/>
<circle cx="773" cy="101.3" r="2.8"/>
<path d="M777.2 116 a7.5 7.5 0 1 0 0.01 0Z M777.2 119.2 a4.3 4.3 0 1 1 -0.01 0Z" fill-rule="evenodd"/>
<path d="M771.5 128.8 L764 136.2 Q762.5 138.5 765 139.2 L773.3 131.6Z"/>
<path d="M763.8 152 V146.2 Q763.8 145.4 764.6 145.4 H770.4 V148.3 H766.7 V152Z"/>
<path d="M783.8 152 V146.2 Q783.8 145.4 783 145.4 H776.5 V148.3 H780.9 V152Z"/>
<path d="M763.8 158.7 V164.6 Q763.8 165.4 764.6 165.4 H770.4 V162.5 H766.7 V158.7Z"/>
<path d="M783.8 158.7 V164.6 Q783.8 165.4 783 165.4 H776.5 V162.5 H780.9 V158.7Z"/>
<path d="M771.8 151.2 H774.2 V153.6 H776.6 V156 H774.2 V158.4 H771.8 V156 H769.4 V153.6 H771.8Z"/>
<path d="M770.4 191.9 Q762.4 190 762.4 182 a10.3 10.3 0 0 1 20.6 0 Q783 190 775.2 191.9 V182.8 H778.8 L772.8 176.8 L766.8 182.8 H770.4Z"/>
</g>
<circle cx="710" cy="115.8" r="37.7" fill="url(#navs)" opacity="0.9"/>
<ellipse cx="710" cy="115.8" rx="37" ry="10" fill="none" stroke="#dddddd" stroke-width="0.7"/>
<ellipse cx="710" cy="115.8" rx="12" ry="37" fill="none" stroke="#dddddd" stroke-width="0.7"/>
<path d="M680.4 97.4 L722.7 101.2 L722.7 144.3 L680.4 140.2Z" fill="#5a5a98"/>
<path d="M680.4 97.4 L696.7 87.5 L740.3 91.3 L722.7 101.2Z" fill="#2e4a30"/>
<path d="M722.7 101.2 L740.3 91.3 L740.3 134.1 L722.7 144.3Z" fill="#563434"/>
<path d="M680.4 97.4 L696.7 87.5 L740.3 91.3 L740.3 134.1 L722.7 144.3 L680.4 140.2Z M680.4 97.4 L722.7 101.2 L740.3 91.3 M722.7 101.2 V144.3" fill="none" stroke="#222" stroke-width="1.4" stroke-linejoin="round"/>
<text x="687" y="124" font-family="Liberation Sans" font-size="11" fill="#2a2a44" transform="rotate(3 700 120)">Front</text>
<path d="M680.4 121 Q700 125.5 722.7 123.5 Q732 122 740.3 119.5" fill="none" stroke="#e6e6e6" stroke-width="1.3"/>
<path d="M699.5 87.8 Q694 112 701.5 143.2" fill="none" stroke="#e6e6e6" stroke-width="1.3"/>

</svg>
</div>
<!-- dark column & vertical tabs -->
<div class="a" style="left:794px;top:0;width:29px;height:916px;background:#353535"></div>
<svg class="a" width="30" height="916" style="left:794px;top:0">
<!-- panel menu icon -->
<rect x="9.5" y="5.5" width="20" height="21" fill="#383838" stroke="#454545"/>
<path d="M11 7.3 L17 10.8 L11 14.3 Z" fill="#c4c4c4"/><path d="M16.6 10.2H24.8M15.2 13.3H24.8M12.8 16.5H24.8M12.8 19.4H24.8" stroke="#dcdcdc" stroke-width="1.3"/>
<!-- collapse widget -->
<rect x="0.5" y="437" width="8" height="48" fill="#3c3c3c"/>
<path d="M6 453 L2 456 L6 459Z M6 462 L2 465 L6 468Z" fill="#555"/>
<defs><linearGradient id="tg" x1="0" x2="1" y1="0" y2="0"><stop offset="0" stop-color="#4c4c4c"/><stop offset="1" stop-color="#434343"/></linearGradient></defs><path d="M28.5 99 C22 101 10 104 9.5 109 L9.5 184 C10 189 22 191 28.5 195 Z" fill="url(#tg)" stroke="#2c2c2c" stroke-width="1"/><path d="M28.5 200 C22 202 10 205 9.5 210 L9.5 292 C10 297 22 299 28.5 303 Z" fill="url(#tg)" stroke="#2c2c2c" stroke-width="1"/><path d="M28.5 306 C22 308 10 311 9.5 316 L9.5 418 C10 423 22 425 28.5 429 Z" fill="url(#tg)" stroke="#2c2c2c" stroke-width="1"/><path d="M28.5 433.5 C22 435.5 10 438.5 9.5 443.5 L9.5 539 C10 544 22 546 28.5 550 Z" fill="url(#tg)" stroke="#2c2c2c" stroke-width="1"/><path d="M30 26 L28.5 26 C22 28 10 31 9.5 36 L9.5 86 C10 91 22 93 28.5 97 L30 97 Z" fill="#5c5c5c" stroke="#2c2c2c" stroke-width="1"/><rect x="29" y="26" width="2" height="72" fill="#5c5c5c"/>
</svg>
<div class="vt" style="left:806px;top:79px;color:#d4d4d4">Scene</div>
<div class="vt" style="left:806px;top:178px">Parameters</div>
<div class="vt" style="left:806px;top:286px">Tool Settings</div>
<div class="vt" style="left:806px;top:412px">Surfaces (Color)</div>
<div class="vt" style="left:806px;top:533px">Look at my Hair</div>
<!-- right panel -->
<div class="a" style="left:823px;top:5px;width:417px;height:911px;background:#5e5e5e"></div>
<div class="a" style="left:822px;top:99px;width:1px;height:817px;background:#2e2e2e"></div>
<!-- search row -->
<div class="a" style="left:828px;top:9px;width:407px;height:28px;background:#4b4b4b"></div>
<svg class="a" width="24" height="24" style="left:831px;top:12px"><circle cx="12" cy="9.5" r="5.6" fill="none" stroke="#7a7a7a" stroke-width="2"/><path d="M12.5 6.2 Q9.5 6.5 9 9" stroke="#8a8a8a" stroke-width="1" fill="none"/><path d="M8 13.5 L4 18" stroke="#7a7a7a" stroke-width="2.8" stroke-linecap="round"/><path d="M16.5 19 L21.3 19 L18.9 22Z" fill="#7a7a7a"/></svg>
<div class="a" style="left:856px;top:12px;width:325px;height:23px;background:#6f6f6f;border-top:1px solid #626262"></div>
<div class="a t11" style="left:861px;top:18px;color:#9c9c9c">Enter text to filter by...</div>
<div class="a" style="left:1183px;top:12px;width:24px;height:23px;background:linear-gradient(#676767,#555);border:1px solid #474747;border-top-color:#6d6d6d"></div>
<div class="a" style="left:1209px;top:12px;width:24px;height:23px;background:linear-gradient(#676767,#555);border:1px solid #474747;border-top-color:#6d6d6d"></div>
<svg class="a" width="60" height="23" style="left:1183px;top:12px"><path d="M7 11.5 L12 7.5 L12 15.5Z M11 10.5H17V12.5H11Z" fill="#cfcfcf"/><path d="M42 11.5 L37 7.5 L37 15.5Z M32 10.5H38V12.5H32Z" fill="#cfcfcf"/></svg>
<!-- tree box -->
<div class="a" style="left:828px;top:38px;width:407px;height:848px;background:#575757;border:1px solid #474747;border-right-color:#4d4d4d;box-shadow:inset 1px 1px 0 #4f4f4f"></div>
<div class="hdr t11" style="left:830px;width:20px"><span class="a" style="left:3px;top:4px">V</span></div>
<div class="hdr t11" style="left:850px;width:20px"><span class="a" style="left:3px;top:4px">S</span></div>
<div class="hdr t11" style="left:870px;width:363px"><span class="a" style="left:3px;top:4px">Node</span></div>
<!-- rows -->
<div class="a" style="left:830px;top:83px;width:403px;height:20px;background:#f8c52c"></div>
<svg class="a" width="80" height="42" style="left:828px;top:62px"><g transform="translate(4,5)"><path d="M0.3 6.8 Q8 -0.8 15.7 6.8 Q8 13.6 0.3 6.8Z" fill="#d2d2d2"/><path d="M3 6.8 Q8 2.6 13 6.8 Q8 10.6 3 6.8Z" fill="#595959"/><circle cx="8" cy="6.8" r="2.7" fill="#d2d2d2"/><circle cx="7" cy="5.9" r="0.8" fill="#595959"/><path d="M2.2 4 L0.6 1.8 M4.6 2.6 L3.7 0.2 M8 2 V-0.4 M11.4 2.6 L12.3 0.2 M13.8 4 L15.4 1.8" stroke="#d2d2d2" stroke-width="1.5" fill="none"/></g><g transform="translate(25,4)" fill="#d2d2d2"><path d="M0.5 0 L9 6 L5.8 6.6 L7.6 11.5 L5.8 12.6 L4 7.8 L1.2 9.8 Z"/><path d="M8 9 L9.6 11.2 L14.5 5" fill="none" stroke="#d2d2d2" stroke-width="1.3"/></g><g fill="#c4c4c4"><circle cx="57.4" cy="6.8" r="3.3"/><circle cx="64" cy="6.8" r="3.3"/><rect x="54.8" y="10.6" width="11.2" height="7.2"/><path d="M66 14 L70 11 L70 17.8 Z"/></g><g transform="translate(4,25)"><path d="M0.3 6.8 Q8 -0.8 15.7 6.8 Q8 13.6 0.3 6.8Z" fill="#000"/><path d="M3 6.8 Q8 2.6 13 6.8 Q8 10.6 3 6.8Z" fill="#f8c52c"/><circle cx="8" cy="6.8" r="2.7" fill="#000"/><circle cx="7" cy="5.9" r="0.8" fill="#f8c52c"/><path d="M2.2 4 L0.6 1.8 M4.6 2.6 L3.7 0.2 M8 2 V-0.4 M11.4 2.6 L12.3 0.2 M13.8 4 L15.4 1.8" stroke="#000" stroke-width="1.5" fill="none"/></g><g transform="translate(25,24)" fill="#000"><path d="M0.5 0 L9 6 L5.8 6.6 L7.6 11.5 L5.8 12.6 L4 7.8 L1.2 9.8 Z"/><path d="M8 9 L9.6 11.2 L14.5 5" fill="none" stroke="#000" stroke-width="1.3"/></g><path d="M45 28 L51 31.6 L45 35Z" fill="#000"/><path d="M65.24 29.70L61.60 31.80L57.96 29.70L57.96 25.50L61.60 23.40L65.24 25.50ZM61.54 36.40L57.90 38.50L54.26 36.40L54.26 32.20L57.90 30.10L61.54 32.20ZM69.04 36.40L65.40 38.50L61.76 36.40L61.76 32.20L65.40 30.10L69.04 32.20Z" fill="none" stroke="#1a1a1a" stroke-width="1.1"/></svg>
<div class="a t11" style="left:902px;top:67px;color:#d8d8d8">Default Camera</div>
<div class="a t11" style="left:902px;top:87px;color:#111">Genesis</div>
<!-- bottom splitter & tabs -->
<div class="a" style="left:824px;top:890px;width:415px;height:5px;background:#4f4f4f"></div>
<div class="a" style="left:1021px;top:890px;width:20px;height:5px;background:#363636"></div><div class="a" style="left:1023px;top:891px;width:16px;height:1px;background:#5c5c64"></div><div class="a" style="left:1023px;top:893px;width:16px;height:1px;background:#5c5c64"></div>
<div class="a" style="left:827px;top:898px;width:410px;height:18px;background:linear-gradient(#606060,#505050);border-top:1px solid #6a6a6a;border-right:1px solid #3c3c3c"></div>
<div class="a" style="left:827px;top:898px;width:43px;height:18px;background:linear-gradient(#5a5a5a,#4c4c4c);border:1px solid #444;border-bottom:none"></div>
<div class="a" style="left:871px;top:898px;width:52px;height:18px;background:linear-gradient(#646464,#555);border:1px solid #454545;border-bottom:none;border-top-color:#747474"></div>
<div class="a" style="left:838px;top:901px;color:#8c8c8c;font-size:12px;line-height:14px">Tips</div>
<div class="a" style="left:884px;top:901px;color:#dedede;font-size:12px;line-height:14px">Node</div>
<div class="a" style="left:962px;top:97px;width:168px;height:132px;background:rgba(0,0,0,0.35);filter:blur(1.5px)"></div><div class="a" style="left:959px;top:94px;width:168px;height:132px;background:#5f5f5f;border:1px solid #3b3b3b"></div><div class="a" style="left:964px;top:117px;width:157px;height:1px;background:#353535"></div><div class="a" style="left:964px;top:118px;width:157px;height:1px;background:#6c6c6c"></div><div class="a" style="left:964px;top:139px;width:157px;height:1px;background:#353535"></div><div class="a" style="left:964px;top:140px;width:157px;height:1px;background:#6c6c6c"></div><div class="a" style="left:964px;top:181px;width:157px;height:1px;background:#353535"></div><div class="a" style="left:964px;top:182px;width:157px;height:1px;background:#6c6c6c"></div><div class="a" style="left:962px;top:183px;width:162px;height:20px;background:#f8c52c"></div><div class="a t11" style="left:979px;top:101.3px;color:#d6d6d6">Select</div><div class="a t11" style="left:979px;top:123.2px;color:#d6d6d6">Delete "Genesis"</div><div class="a t11" style="left:979px;top:145.4px;color:#d6d6d6">Fit "Genesis" To...</div><div class="a t11" style="left:979px;top:165.2px;color:#d6d6d6">Change "Genesis" Parent...</div><div class="a t11" style="left:979px;top:187.3px;color:#111">Expand</div><div class="a t11" style="left:979px;top:207.3px;color:#d6d6d6">Collapse</div><svg class="a" width="12" height="130" style="left:1107px;top:94px"><path d="M3 9.5 L9 13 L3 16.5Z" fill="#cfcfcf"/><path d="M3 95.5 L9 99 L3 102.5Z" fill="#000"/><path d="M3 115.5 L9 119 L3 122.5Z" fill="#cfcfcf"/></svg><div class="a" style="left:823px;top:187px;width:142px;height:64px;background:rgba(0,0,0,0.35);filter:blur(1.5px)"></div><div class="a" style="left:820px;top:184px;width:142px;height:64px;background:#5f5f5f;border:1px solid #3b3b3b"></div><div class="a" style="left:822px;top:186px;width:137px;height:20px;background:#f8c52c"></div><div class="a t11" style="left:839px;top:190.2px;color:#111">Expand All</div><div class="a t11" style="left:839px;top:209.9px;color:#d6d6d6">Expand Selected</div><div class="a t11" style="left:839px;top:229.9px;color:#d6d6d6">Expand from Selected</div>
</body></html>
